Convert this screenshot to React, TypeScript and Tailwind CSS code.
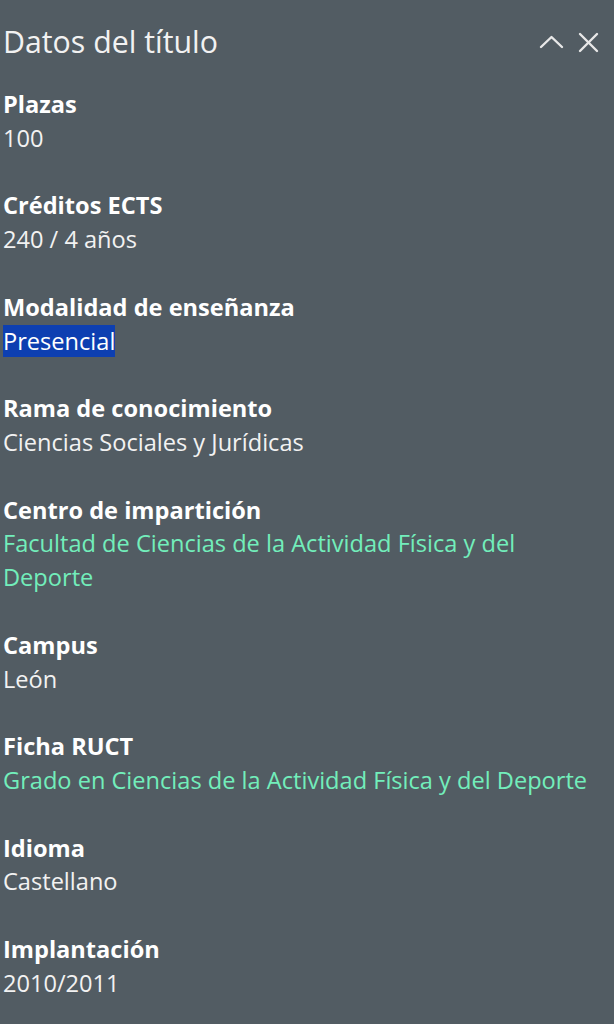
interface Field {
  label: string;
  value: string;
  kind?: 'link' | 'selected';
}

const FIELDS: Field[] = [
  { label: 'Plazas', value: '100' },
  { label: 'Créditos ECTS', value: '240 / 4 años' },
  { label: 'Modalidad de enseñanza', value: 'Presencial', kind: 'selected' },
  { label: 'Rama de conocimiento', value: 'Ciencias Sociales y Jurídicas' },
  { label: 'Centro de impartición', value: 'Facultad de Ciencias de la Actividad Física y del Deporte', kind: 'link' },
  { label: 'Campus', value: 'León' },
  { label: 'Ficha RUCT', value: 'Grado en Ciencias de la Actividad Física y del Deporte', kind: 'link' },
  { label: 'Idioma', value: 'Castellano' },
  { label: 'Implantación', value: '2010/2011' },
];

export default function App() {
  return (
    <div
      className="w-[614px] h-[1024px] bg-[#525c63] text-[#f2f2f2] overflow-hidden"
      style={{ fontFamily: '"Open Sans", "Noto Sans", sans-serif' }}
    >
      <div className="flex items-center justify-between pl-[3px] pr-[15px] pt-[21px]">
        <h1 className="text-[30.3px] leading-[42px] font-normal">Datos del título</h1>
        <div className="flex items-center gap-[14px] text-[#e8e8e8]">
          {/* chevron up */}
          <svg width="25" height="16" viewBox="0 0 25 16" fill="none" stroke="currentColor" strokeWidth="2.4" strokeLinecap="round" strokeLinejoin="round">
            <polyline points="2,13 12.5,3 23,13" />
          </svg>
          {/* close */}
          <svg width="21" height="21" viewBox="0 0 21 21" fill="none" stroke="currentColor" strokeWidth="2.4" strokeLinecap="round">
            <line x1="2" y1="2" x2="19" y2="19" />
            <line x1="19" y1="2" x2="2" y2="19" />
          </svg>
        </div>
      </div>

      <dl className="pl-[3px] pr-[16px] pt-[25px] text-[23.6px] leading-[33.8px]">
        {FIELDS.map((f) => (
          <div key={f.label} className="mb-[33.8px]">
            <dt className="font-bold text-white">{f.label}</dt>
            <dd>
              {f.kind === 'link' ? (
                <a className="text-[#72eebb]">{f.value}</a>
              ) : f.kind === 'selected' ? (
                <span className="bg-[#0d3fb1] text-white">{f.value}</span>
              ) : (
                f.value
              )}
            </dd>
          </div>
        ))}
      </dl>
    </div>
  );
}
